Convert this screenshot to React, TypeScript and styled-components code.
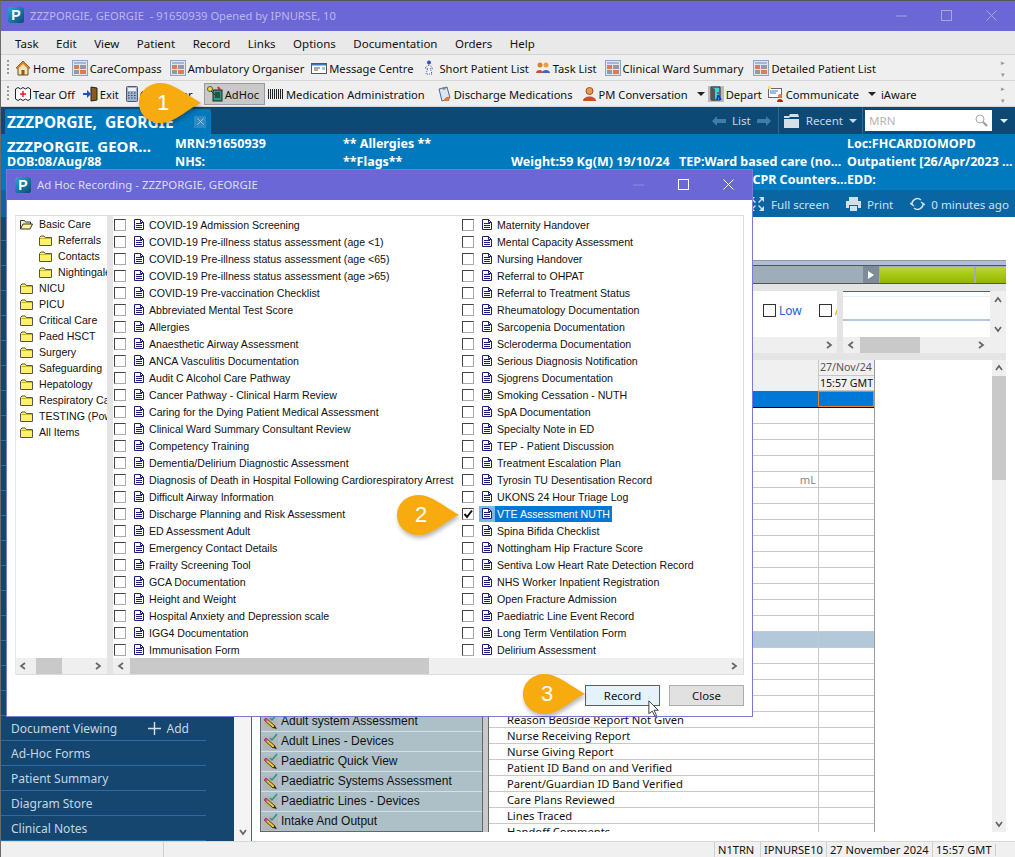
import React from "react";
import styled, { createGlobalStyle } from "styled-components";

const UI = `"Noto Sans", "Open Sans", sans-serif`;
const NARROW = `"Liberation Sans", Arial, sans-serif`;

const GlobalStyle = createGlobalStyle`
  html, body { margin: 0; padding: 0; background: #fff; }
  body { font-family: ${UI}; font-size: 11.5px; color: #111; }
  * { box-sizing: border-box; }
`;

const leftForms = [
  "COVID-19 Admission Screening",
  "COVID-19 Pre-illness status assessment (age <1)",
  "COVID-19 Pre-illness status assessment (age <65)",
  "COVID-19 Pre-illness status assessment (age >65)",
  "COVID-19 Pre-vaccination Checklist",
  "Abbreviated Mental Test Score",
  "Allergies",
  "Anaesthetic Airway Assessment",
  "ANCA Vasculitis Documentation",
  "Audit C Alcohol Care Pathway",
  "Cancer Pathway - Clinical Harm Review",
  "Caring for the Dying Patient Medical Assessment",
  "Clinical Ward Summary Consultant Review",
  "Competency Training",
  "Dementia/Delirium Diagnostic Assessment",
  "Diagnosis of Death in Hospital Following Cardiorespiratory Arrest",
  "Difficult Airway Information",
  "Discharge Planning and Risk Assessment",
  "ED Assessment Adult",
  "Emergency Contact Details",
  "Frailty Screening Tool",
  "GCA Documentation",
  "Height and Weight",
  "Hospital Anxiety and Depression scale",
  "IGG4 Documentation",
  "Immunisation Form",
];

const rightForms = [
  "Maternity Handover",
  "Mental Capacity Assessment",
  "Nursing Handover",
  "Referral to OHPAT",
  "Referral to Treatment Status",
  "Rheumatology Documentation",
  "Sarcopenia Documentation",
  "Scleroderma Documentation",
  "Serious Diagnosis Notification",
  "Sjogrens Documentation",
  "Smoking Cessation - NUTH",
  "SpA Documentation",
  "Specialty Note in ED",
  "TEP - Patient Discussion",
  "Treatment Escalation Plan",
  "Tyrosin TU Desentisation Record",
  "UKONS 24 Hour Triage Log",
  "VTE Assessment NUTH",
  "Spina Bifida Checklist",
  "Nottingham Hip Fracture Score",
  "Sentiva Low Heart Rate Detection Record",
  "NHS Worker Inpatient Registration",
  "Open Fracture Admission",
  "Paediatric Line Event Record",
  "Long Term Ventilation Form",
  "Delirium Assessment",
];

const treeItems = [
  { name: "Basic Care", open: true },
  { name: "Referrals", sub: true },
  { name: "Contacts", sub: true },
  { name: "Nightingale", sub: true },
  { name: "NICU" },
  { name: "PICU" },
  { name: "Critical Care" },
  { name: "Paed HSCT" },
  { name: "Surgery" },
  { name: "Safeguarding" },
  { name: "Hepatology" },
  { name: "Respiratory Care" },
  { name: "TESTING (Pow)" },
  { name: "All Items" },
];

const formRows = [
  "Adult Quick View",
  "Adult system Assessment",
  "Adult Lines - Devices",
  "Paediatric Quick View",
  "Paediatric Systems Assessment",
  "Paediatric Lines - Devices",
  "Intake And Output",
];

const sideItems = [
  "Summary", "Orders", "Results", "Notes", "Allergies", "Diagnoses", "Medications", "Vitals",
  "Fluid Balance", "Pathology", "Radiology", "Referrals", "Letters", "Appointments", "Care Plans",
  "Observations", "Assessments", "Tasks", "Handover", "Contacts",
];

const tableLabels: Record<number, string> = {
  19: "Reason Bedside Report Not Given",
  20: "Nurse Receiving Report",
  21: "Nurse Giving Report",
  22: "Patient ID Band on and Verified",
  23: "Parent/Guardian ID Band Verified",
  24: "Care Plans Reviewed",
  25: "Lines Traced",
  26: "Handoff Comments",
};

const Page = styled.div`
  position: relative;
  width: 1015px;
  height: 857px;
  overflow: hidden;
  display: flex;
  flex-direction: column;
  background: #fff;
  border-top: 1px solid #555;
  border-left: 1px solid #6a6a6a;
`;

const TitleBar = styled.div`
  height: 30px;
  flex: none;
  display: flex;
  align-items: center;
  padding: 0 0 2px 7px;
  gap: 6px;
  background: #6b67d6;
  color: #b9b8ec;
  font-size: 11.2px;
  white-space: pre;
`;

const WindowButtons = styled.div<{ $gap: number; $right: number }>`
  margin-left: auto;
  margin-right: ${(p) => p.$right}px;
  display: flex;
  align-items: center;
  gap: ${(p) => p.$gap}px;
`;

const MenuBar = styled.div`
  height: 24px;
  flex: none;
  display: flex;
  align-items: center;
  padding: 2px 0 0 14px;
  gap: 17.5px;
  background: #e8e9e8;
  border-bottom: 1px solid #d4d4d4;
`;

const Toolbar = styled.div`
  height: 26px;
  flex: none;
  display: flex;
  align-items: center;
  background: #eeefee;
  border-bottom: 1px solid #d4d4d4;
  padding: 1px 0 0 6px;
  font-size: 11.15px;
  white-space: nowrap;
  position: relative;
`;

const Grip = styled.div`
  width: 2px;
  height: 16px;
  margin-right: 6px;
  background: repeating-linear-gradient(to bottom, #999 0 2px, transparent 2px 4px);
`;

const ToolItem = styled.div<{ $active?: boolean; $gap?: number }>`
  display: flex;
  align-items: center;
  gap: 2px;
  height: 22px;
  padding: 0 ${(p) => (p.$active ? 5 : 0)}px 0 ${(p) => (p.$active ? 2 : 0)}px;
  margin-right: ${(p) => (p.$gap !== undefined ? p.$gap : 7)}px;
  background: ${(p) => (p.$active ? "#c9c9c9" : "transparent")};
  border: ${(p) => (p.$active ? "1px solid #9a9a9a" : "none")};
`;

const Overflow = styled.div`
  margin-left: auto;
  margin-right: 6px;
  width: 8px;
  display: flex;
  flex-direction: column;
  gap: 5px;
  color: #999;
  font-size: 7px;
  line-height: 7px;
`;

const TabBar = styled.div`
  height: 27px;
  flex: none;
  display: flex;
  align-items: flex-end;
  padding-left: 4px;
  background: #0c4a75;
  color: #c7d7e5;
`;

const Tab = styled.div`
  width: 206px;
  height: 25px;
  display: flex;
  align-items: center;
  justify-content: space-between;
  padding: 0 5px 0 2px;
  background: #0079bf;
  color: #fff;
  font-weight: 700;
  font-size: 15.6px;
  white-space: pre;
  border-radius: 2px 2px 0 0;
`;

const TabClose = styled.span`
  width: 12px;
  height: 12px;
  display: flex;
  align-items: center;
  justify-content: center;
  background: #2f8ac2;
`;

const TabTools = styled.div`
  margin-left: auto;
  height: 27px;
  display: flex;
  align-items: center;
  font-size: 11.6px;
`;

const TabTool = styled.div<{ $pad: number; $after: number }>`
  height: 27px;
  display: flex;
  align-items: center;
  gap: 6px;
  padding-right: ${(p) => p.$pad}px;
  margin-right: ${(p) => p.$after}px;
  border-right: 1px solid #2a6a94;
`;

const SearchBox = styled.div`
  width: 127px;
  height: 21px;
  display: flex;
  align-items: center;
  justify-content: space-between;
  padding: 0 4px;
  background: #fff;
  color: #b5b5b5;
`;

const Caret = styled.span<{ $color?: string }>`
  width: 0;
  height: 0;
  border-left: 4px solid transparent;
  border-right: 4px solid transparent;
  border-top: 4px solid ${(p) => p.$color || "#c7d7e5"};
`;

const MenuCaret = styled(Caret)`
  margin-left: 7px;
`;

const DownBox = styled.div`
  width: 23px;
  display: flex;
  justify-content: center;
`;

const Banner = styled.div`
  height: 56px;
  flex: none;
  display: grid;
  grid-template-columns: repeat(6, 168px);
  grid-auto-rows: 18px;
  padding: 1px 0 0 6px;
  background: #0079bf;
  color: #fff;
  font-weight: 700;
  font-size: 12.5px;
  line-height: 18px;
  white-space: nowrap;
`;

const PatientName = styled.div`
  font-size: 15px;
  line-height: 20px;
  padding-top: 1px;
`;

const BannerEnd = styled.div<{ $col: number }>`
  grid-column: ${(p) => p.$col};
  justify-self: end;
`;

const ActionBar = styled.div`
  height: 27px;
  flex: none;
  display: flex;
  align-items: center;
  justify-content: flex-end;
  padding: 1px 6px 0 0;
  gap: 6px;
  background: #0a65a3;
  color: #cfe0ee;
  font-size: 11.6px;
`;

const ActionGap = styled.span`
  width: 5px;
`;

const Main = styled.div`
  flex: 1;
  min-height: 0;
  display: flex;
  border-bottom: 1px solid #d8d8d8;
`;

const Sidebar = styled.div`
  width: 233px;
  flex: none;
  display: flex;
  flex-direction: column;
  justify-content: flex-end;
  overflow: hidden;
  background: #14466f;
  color: #c6d6e6;
`;

const SideRow = styled.div`
  width: 205px;
  height: 25px;
  flex: none;
  display: flex;
  align-items: center;
  justify-content: space-between;
  padding: 0 17px 0 10px;
  border-bottom: 1px solid #2a6ca8;
  font-size: 12px;
`;

const SideAdd = styled.span`
  display: flex;
  align-items: center;
  gap: 6px;
`;

const SideScroll = styled.div`
  width: 18px;
  flex: none;
  display: flex;
  flex-direction: column;
  justify-content: flex-end;
  align-items: center;
  padding-bottom: 5px;
  background: #f4f4f4;
  border-right: 1px solid #1c6fb0;
`;

const Content = styled.div`
  flex: 1;
  min-width: 0;
  display: flex;
  flex-direction: column;
  padding: 43px 9px 0 0;
`;

const Timeline = styled.div`
  height: 24px;
  flex: none;
  display: flex;
  flex-direction: column;
  background: #fff;
  border-top: 1px solid #999;
`;

const TimelineStripe = styled.div`
  height: 5px;
  flex: none;
  background: #a9c0d8;
  border-bottom: 1px solid #555;
`;

const TimelineBar = styled.div`
  flex: 1;
  display: flex;
  justify-content: flex-end;
  gap: 2px;
  background: #9eadb8;
  border-bottom: 1px solid #555;
  padding-top: 1px;
`;

const TimelineArrow = styled.div`
  width: 16px;
  display: flex;
  align-items: center;
  justify-content: center;
  background: #7d8c99;
  margin-right: -1px;
  margin-top: -1px;
`;

const GreenBlock = styled.div<{ $width: number }>`
  width: ${(p) => p.$width}px;
  background: linear-gradient(180deg, #bcd92a 0%, #93b500 100%);
`;

const Filters = styled.div`
  height: 76px;
  flex: none;
  display: flex;
  gap: 6px;
  padding: 7px 0;
  background: #e4e4e4;
`;

const FilterPane = styled.div`
  flex: 1;
  display: flex;
  flex-direction: column;
  background: #fff;
`;

const FilterChecks = styled.div`
  flex: 1;
  display: flex;
  align-items: center;
  justify-content: flex-end;
  gap: 3px;
  padding-bottom: 8px;
  overflow: hidden;
`;

const FilterLabel = styled.span<{ $color: string; $width: number }>`
  width: ${(p) => p.$width}px;
  overflow: hidden;
  color: ${(p) => p.$color};
  font-size: 12px;
`;

const FilterBox = styled.span`
  width: 13px;
  height: 13px;
  flex: none;
  background: #fff;
  border: 1px solid #333;
`;

const HScroll = styled.div<{ $h?: number }>`
  height: ${(p) => p.$h || 16}px;
  flex: none;
  display: flex;
  align-items: center;
  background: #efefef;
`;

const ScrollThumb = styled.div<{ $left: number; $width: number }>`
  width: ${(p) => p.$width}px;
  margin-left: ${(p) => p.$left}px;
  height: 100%;
  background: #c9c9c9;
`;

const ScrollEnd = styled.div<{ $pad: number }>`
  margin-left: auto;
  margin-right: ${(p) => p.$pad}px;
  display: flex;
`;

const ScrollStart = styled.div<{ $pad: number }>`
  margin-left: ${(p) => p.$pad}px;
  width: 0;
  display: flex;
`;

const SidePane = styled.div`
  width: 163px;
  flex: none;
  display: grid;
  grid-template-columns: 1fr 16px;
  grid-template-rows: 1fr 16px;
  background: #efefef;
`;

const SideInner = styled.div`
  background: #fff;
  border-top: 1px solid #1c6fb0;
  display: flex;
  flex-direction: column;
`;

const InnerLine = styled.div<{ $top: number; $color: string; $h: number }>`
  margin-top: ${(p) => p.$top}px;
  height: ${(p) => p.$h}px;
  background: ${(p) => p.$color};
`;

const VButtons = styled.div`
  display: flex;
  flex-direction: column;
  align-items: center;
  justify-content: space-between;
  padding: 5px 0 4px;
`;

const GridArea = styled.div`
  flex: 1;
  min-height: 0;
  display: flex;
  overflow: hidden;
  margin-bottom: 9px;
`;

const FormColumn = styled.div`
  width: 222px;
  margin-left: 8px;
  flex: none;
  display: flex;
  flex-direction: column;
  justify-content: flex-end;
  overflow: hidden;
  background: #adc0c8;
  border-bottom: 1px solid #666;
  border-left: 1px solid #666;
`;

const FormRow = styled.div`
  height: 20px;
  flex: none;
  display: flex;
  align-items: center;
  gap: 3px;
  padding: 0 0 1px 2px;
  border-top: 1px solid #d5e0e4;
  font-family: ${NARROW};
  font-size: 12px;
  color: #111;
`;

const FormScroll = styled.div`
  width: 7px;
  flex: none;
  background: #c9c9c9;
  border-left: 1px solid #666;
  border-right: 1px solid #666;
`;

const Table = styled.div`
  width: 386px;
  flex: none;
  display: flex;
  flex-direction: column;
  border-right: 1px solid #999;
  overflow: hidden;
`;

const HeadRow = styled.div<{ $h: number }>`
  height: ${(p) => p.$h}px;
  flex: none;
  display: flex;
  background: #f0f0f0;
`;

const HeadLabel = styled.div`
  flex: 1;
`;

const HeadCell = styled.div<{ $dark?: boolean }>`
  width: 56px;
  flex: none;
  padding-left: 1px;
  border-left: 1px solid #c8c8c8;
  border-bottom: 1px solid #c8c8c8;
  font-size: 10.6px;
  line-height: 15px;
  color: ${(p) => (p.$dark ? "#111" : "#555")};
  white-space: nowrap;
  overflow: hidden;
`;

const SelectedRow = styled.div`
  height: 17px;
  flex: none;
  display: flex;
  background: #0078d7;
  border-bottom: 1px solid #000;
`;

const SelectedCell = styled.div`
  width: 56px;
  margin-left: auto;
  border: 1px solid #e8812a;
`;

const DataRow = styled.div<{ $band?: boolean }>`
  height: 16px;
  flex: none;
  display: flex;
  background: ${(p) => (p.$band ? "#b3c8db" : "#fff")};
  border-bottom: 1px solid #c8c8c8;
  font-size: 11.2px;
  line-height: 15px;
`;

const DataLabel = styled.div`
  flex: 1;
  padding-left: 18px;
  white-space: nowrap;
`;

const Unit = styled.span`
  float: right;
  margin-right: 2px;
  color: #888;
`;

const DataCell = styled.div`
  width: 56px;
  flex: none;
  border-left: 1px solid #c8c8c8;
`;

const VScroll = styled.div`
  width: 14px;
  margin-left: auto;
  flex: none;
  display: flex;
  flex-direction: column;
  justify-content: space-between;
  align-items: center;
  background: #efefef;
`;

const VArrow = styled.div`
  height: 16px;
  display: flex;
  align-items: center;
  justify-content: center;
`;

const VThumb = styled.div`
  width: 14px;
  height: 104px;
  background: #c9c9c9;
  margin-bottom: auto;
`;

const StatusBar = styled.div`
  height: 15px;
  flex: none;
  display: flex;
  justify-content: flex-end;
  align-items: center;
  background: #f0f0f0;
  font-size: 11.1px;
  line-height: 15px;
`;

const Lead = styled.div`
  width: 163px;
  height: 15px;
  flex: none;
  border-right: 1px solid #d0d0d0;
  margin-right: auto;
`;

const StatusCell = styled.div<{ $width: number }>`
  width: ${(p) => p.$width}px;
  height: 15px;
  padding-left: 3px;
  border-left: 1px solid #d0d0d0;
  white-space: nowrap;
  overflow: hidden;
`;

const StatusGrip = styled.div`
  width: 20px;
  height: 12px;
  border-left: 1px solid #d0d0d0;
`;

const Dialog = styled.div`
  position: absolute;
  left: 5px;
  top: 168px;
  width: 747px;
  height: 548px;
  display: flex;
  flex-direction: column;
  background: #fff;
  border: 1px solid #7a78d8;
`;

const DialogTitle = styled.div`
  height: 30px;
  flex: none;
  display: flex;
  align-items: center;
  gap: 6px;
  padding: 0 0 1px 8px;
  background: #6b67d6;
  color: #dcdcf5;
  font-size: 11.4px;
`;

const DialogBody = styled.div`
  flex: 1;
  display: flex;
  flex-direction: column;
  padding: 15px 8px 9px 8px;
`;

const Split = styled.div`
  height: 460px;
  flex: none;
  display: flex;
  background: #e4e4e4;
  border-top: 1px solid #dcdcdc;
  border-bottom: 1px solid #dcdcdc;
  border-right: 1px solid #dcdcdc;
  border-left: 1px solid #e8e8e8;
`;

const Tree = styled.div`
  width: 91px;
  flex: none;
  display: flex;
  flex-direction: column;
  background: #fff;
  margin-right: 6px;
`;

const TreeRows = styled.div`
  flex: 1;
  min-height: 0;
  overflow: hidden;
  font-family: ${NARROW};
  font-size: 10.6px;
`;

const TreeRow = styled.div<{ $sub?: boolean }>`
  height: 16px;
  display: flex;
  align-items: center;
  gap: 6px;
  padding-left: ${(p) => (p.$sub ? 23 : 4)}px;
  white-space: nowrap;
`;

const Lists = styled.div`
  flex: 1;
  min-width: 0;
  display: flex;
  flex-direction: column;
  background: #fff;
`;

const FormGrid = styled.div`
  flex: 1;
  min-height: 0;
  display: grid;
  grid-template-columns: 348px 1fr;
  grid-template-rows: repeat(26, 17px);
  grid-auto-flow: column;
  padding: 0 0 0 1px;
  overflow: hidden;
  font-family: ${NARROW};
  font-size: 10.6px;
`;

const FormItem = styled.div`
  display: flex;
  align-items: center;
  white-space: nowrap;
  min-width: 0;
  overflow: hidden;
`;

const Check = styled.span`
  width: 12px;
  height: 12px;
  flex: none;
  margin-right: 5px;
  background: #fff;
  border: 1px solid;
  border-color: #444 #aaa #aaa #444;
  display: flex;
  align-items: center;
  justify-content: center;
`;

const DocIcon = styled.span<{ $sel?: boolean }>`
  width: 16px;
  height: 16px;
  flex: none;
  display: flex;
  align-items: center;
  justify-content: center;
  background: ${(p) => (p.$sel ? "#7ab8e8" : "transparent")};
`;

const FormText = styled.span<{ $sel?: boolean }>`
  padding: 0 2px 0 2px;
  line-height: 16px;
  background: ${(p) => (p.$sel ? "#0078d7" : "transparent")};
  color: ${(p) => (p.$sel ? "#fff" : "#111")};
`;

const DialogActions = styled.div`
  display: flex;
  justify-content: flex-end;
  gap: 9px;
  margin-top: 10px;
`;

const DialogButton = styled.div<{ $primary?: boolean }>`
  width: 75px;
  height: 21px;
  display: flex;
  align-items: center;
  justify-content: center;
  background: ${(p) => (p.$primary ? "#e5f1fb" : "#e1e1e1")};
  border: 1px solid ${(p) => (p.$primary ? "#0078d7" : "#adadad")};
  font-size: 11.4px;
`;

const Callout = styled.div<{ $x: number; $y: number }>`
  position: absolute;
  left: ${(p) => p.$x}px;
  top: ${(p) => p.$y}px;
  width: 68px;
  height: 48px;
  pointer-events: none;
`;

const CalloutNumber = styled.span`
  position: absolute;
  left: 15px;
  top: 11px;
  width: 26px;
  text-align: center;
  color: #fff;
  font-family: ${NARROW};
  font-size: 22px;
  line-height: 26px;
`;

const Cursor = styled.div`
  position: absolute;
  left: 647px;
  top: 699px;
  width: 12px;
  height: 18px;
`;

const Logo = () => (
  <svg width="16" height="16" viewBox="0 0 16 16" style={{ flex: "none" }}>
    <defs>
      <linearGradient id="lg" x1="0" y1="0" x2="1" y2="1">
        <stop offset="0" stopColor="#2aa6d8" />
        <stop offset="1" stopColor="#0a4a72" />
      </linearGradient>
    </defs>
    <rect width="16" height="16" rx="2.5" fill="url(#lg)" />
    <text x="8" y="13" textAnchor="middle" fontFamily="Liberation Sans" fontWeight="700" fontSize="14" fill="#fff">P</text>
  </svg>
);

const Sq = ({ c = "#a8a6e6" }: { c?: string }) => (
  <svg width="11" height="11" viewBox="0 0 11 11"><rect x=".5" y=".5" width="10" height="10" fill="none" stroke={c} /></svg>
);
const Min = ({ c = "#a8a6e6" }: { c?: string }) => (
  <svg width="11" height="11" viewBox="0 0 11 11"><path d="M0 6h11" stroke={c} /></svg>
);
const Cross = ({ c = "#a8a6e6", s = 11 }: { c?: string; s?: number }) => (
  <svg width={s} height={s} viewBox="0 0 11 11"><path d="M.5.5l10 10M10.5.5l-10 10" stroke={c} /></svg>
);

const Chevron = ({ dir, c = "#666", s = 8 }: { dir: "l" | "r" | "u" | "d"; c?: string; s?: number }) => {
  const d = { l: "M6 1L2 4l4 3", r: "M2 1l4 3-4 3", u: "M1 6l3-4 3 4", d: "M1 2l3 4 3-4" }[dir];
  return (
    <svg width={s} height={s} viewBox="0 0 8 8" style={{ flex: "none" }}><path d={d} fill="none" stroke={c} strokeWidth="1.7" /></svg>
  );
};

const Folder = ({ open }: { open?: boolean }) => (
  <svg width="13" height="11" viewBox="0 0 13 11" style={{ flex: "none" }}>
    {open ? (
      <>
        <path d="M.5 10V1.5h4l1 1.5h5v2" fill="#f4f0c8" stroke="#333" />
        <path d="M.5 10l2.5-5h9.5l-2.5 5z" fill="#fff3a0" stroke="#333" />
      </>
    ) : (
      <>
        <path d="M.5 2.5L2 1h3l1.2 1.5h6.3v8H.5z" fill="#fff06a" stroke="#555" />
        <path d="M1 3.5h11" stroke="#c8b830" />
      </>
    )}
  </svg>
);

const Doc = () => (
  <svg width="10" height="11" viewBox="0 0 10 11">
    <path d="M.5.5h6l3 3v7h-9z" fill="#fff" stroke="#1c1c7a" />
    <path d="M2 4.5h6M2 6.5h6M2 8.5h6M6.5.5v3h3" fill="none" stroke="#1c1c7a" />
  </svg>
);

const I = ({ children, w = 16 }: { children: React.ReactNode; w?: number }) => (
  <svg width={w} height="16" viewBox={`0 0 ${w} 16`} style={{ flex: "none" }}>{children}</svg>
);

const HomeIcon = () => (
  <I><path d="M8 1L1 8h2v7h10V8h2z" fill="#f5e3b0" stroke="#6a4a20" /><path d="M8 1L1 8h3l4-4 4 4h3z" fill="#d9822b" /><rect x="6.5" y="10" width="3" height="5" fill="#8a5a2a" /></I>
);
const GridIcon = () => (
  <I>
    <rect x=".5" y=".5" width="15" height="15" fill="#dce6f0" stroke="#8aa6c4" />
    <path d="M2 3h12" stroke="#6a8ab0" />
    <rect x="2" y="5" width="5" height="4" fill="#e07a50" /><rect x="8" y="5" width="6" height="4" fill="#999" />
    <rect x="2" y="10" width="5" height="4" fill="#999" /><rect x="8" y="10" width="6" height="4" fill="#e07a50" />
  </I>
);
const MailIcon = () => (
  <I><rect x=".5" y="3.5" width="15" height="10" fill="#fff" stroke="#556" /><path d="M1 4h14v1.5H1z" fill="#3a78c0" /><path d="M3 8h6M3 10h4" stroke="#555" /><rect x="11" y="7" width="3" height="3" fill="#9cc" /></I>
);
const PersonIcon = () => (
  <I w={14}><circle cx="6" cy="2.5" r="2" fill="#3050c0" /><path d="M6 5L2 8l1 1 2-1-2 6h6L7 8l2 1 1-1z" fill="#fff" stroke="#3050c0" strokeDasharray="1 1" /></I>
);
const TeamIcon = () => (
  <I><circle cx="5" cy="5" r="2.5" fill="#d9822b" /><path d="M1 13c0-4 7-4 7 0z" fill="#c8502b" /><circle cx="11" cy="5" r="2.5" fill="#e0a050" /><path d="M7 13c0-4 8-4 8 0z" fill="#3a68c0" /></I>
);
const TearIcon = () => (
  <I><path d="M.5 3l2.500-1.500L5.500 3 8 1.500 10.500 3 13 1.500 15.500 3v10L13 14.500 10.500 13 8 14.500 5.500 13 3 14.500.5 13z" fill="#fff" stroke="#222" /><path d="M8 5v6M5 8h6" stroke="#e02020" strokeWidth="1.5" /></I>
);
const ExitIcon = () => (
  <I><path d="M9 1l6 1v12l-6 1z" fill="#8a5a20" stroke="#222" /><path d="M1 7h4V4l4 4-4 4V9H1z" fill="#2050c0" /></I>
);
const CalcIcon = () => (
  <I w={12}><rect x=".5" y=".5" width="11" height="15" rx="1" fill="#9cb4d0" stroke="#557" /><rect x="2" y="2" width="8" height="3" fill="#e8f0f8" /><path d="M2 7h8M2 9.5h8M2 12h8" stroke="#345" strokeDasharray="1.5 1.5" /></I>
);
const AdHocIcon = () => (
  <I><rect x="6" y="4" width="9" height="11" fill="#2a9a80" stroke="#222" /><path d="M8 7h5M8 9h5M8 11h5" stroke="#111" /><circle cx="3" cy="3" r="2.5" fill="#f0e020" stroke="#555" /><path d="M4 5l4 4" stroke="#333" /><path d="M11 1l2 3" stroke="#d02020" strokeWidth="2" /></I>
);
const BarcodeIcon = () => (
  <I><path d="M.5 3v10M2.500 3v10M4.500 3v10M6.500 3v10M8.500 3v10M10.500 3v10M12.500 3v10M14.500 3v10" stroke="#222" /></I>
);
const ClipIcon = () => (
  <I><path d="M3 3l8-2 3 11-8 3z" fill="#dce6f0" stroke="#4a6a90" /><path d="M6 2l3-1 1 2-3 1z" fill="#888" /><path d="M8 15c0-3 3-5 6-4l-1 4z" fill="#e07a30" /></I>
);
const AgentIcon = () => (
  <I w={15}><circle cx="7.5" cy="5" r="3.5" fill="#e89a50" stroke="#a05020" /><path d="M1 15c0-6 13-6 13 0z" fill="#c8502b" /></I>
);
const DepartIcon = () => (
  <I><rect width="16" height="16" fill="#bbb" /><path d="M3 1h9v13H3z" fill="#30d8e0" stroke="#222" /><path d="M3 1l4 2v12l-4-1z" fill="#555" /><path d="M10 9l-1 5M10 9l3 5" stroke="#1030b0" strokeWidth="1.5" /><circle cx="10" cy="7" r="1" fill="#d02020" /></I>
);
const CommIcon = () => (
  <I><rect x=".5" y="2.5" width="13" height="9" fill="#fff" stroke="#667" /><path d="M2 5h8M2 7h6" stroke="#3a78c0" /><rect y="0" width="3" height="3" fill="#f0e080" /><circle cx="12" cy="10" r="2" fill="#e08030" /><path d="M9 16c0-4 6-4 6 0z" fill="#c02010" /></I>
);

const Pen = () => (
  <svg width="15" height="17" viewBox="0 0 15 17" style={{ flex: "none" }}>
    <rect y="3" width="15" height="14" fill="#b5b5b5" />
    <path d="M1 7l2-2 9 8-2 2z" fill="#e8c820" stroke="#222" strokeWidth=".8" />
    <path d="M1 7l2-2 2 2-2 2z" fill="#e040a0" />
    <path d="M10 15l2-2 2 3z" fill="#222" />
    <path d="M7 5l2 2 5-6" fill="none" stroke="#1a9a8a" strokeWidth="1.5" />
  </svg>
);

const TEAR = "M4 24C4 12 14 4 26 4C38 4 52 16 66 24C52 30 40 44 26 44C14 44 4 36 4 24z";

const Tear = () => (
  <svg width="68" height="48" viewBox="0 0 68 48" style={{ overflow: "visible" }}>
    <path d={TEAR} fill="#000" opacity=".28" transform="translate(1 3)" style={{ filter: "blur(2px)" }} />
    <path d={TEAR} fill="#f8ab0e" />
  </svg>
);

const Step = ({ x, y, n }: { x: number; y: number; n: number }) => (
  <Callout $x={x} $y={y}>
    <Tear />
    <CalloutNumber>{n}</CalloutNumber>
  </Callout>
);

const tools1: [React.ReactNode, string, number][] = [
  [<HomeIcon />, "Home", 7],
  [<GridIcon />, "CareCompass", 8],
  [<GridIcon />, "Ambulatory Organiser", 7],
  [<MailIcon />, "Message Centre", 10],
  [<PersonIcon />, "Short Patient List", 6],
  [<TeamIcon />, "Task List", 8],
  [<GridIcon />, "Clinical Ward Summary", 10],
  [<GridIcon />, "Detailed Patient List", 7],
];

const rowCount = 27;

export default function App() {
  return (
    <>
      <GlobalStyle />
      <Page>
        <TitleBar>
          <Logo />
          ZZZPORGIE, GEORGIE  - 91650939 Opened by IPNURSE, 10
          <WindowButtons $gap={34} $right={18}>
            <Min />
            <Sq />
            <Cross />
          </WindowButtons>
        </TitleBar>
        <MenuBar>
          {["Task", "Edit", "View", "Patient", "Record", "Links", "Options", "Documentation", "Orders", "Help"].map((m) => (
            <span key={m}>{m}</span>
          ))}
        </MenuBar>
        <Toolbar>
          <Grip />
          {tools1.map(([icon, label, gap]) => (
            <ToolItem key={label} $gap={gap}>{icon}{label}</ToolItem>
          ))}
          <Overflow><span>▸</span><span>▾</span></Overflow>
        </Toolbar>
        <Toolbar>
          <Grip />
          <ToolItem><TearIcon />Tear Off</ToolItem>
          <ToolItem><ExitIcon />Exit</ToolItem>
          <ToolItem $gap={11}><CalcIcon />Calculator</ToolItem>
          <ToolItem $active $gap={3}><AdHocIcon />AdHoc</ToolItem>
          <ToolItem $gap={11}><BarcodeIcon />Medication Administration</ToolItem>
          <ToolItem $gap={9}><ClipIcon />Discharge Medications</ToolItem>
          <ToolItem $gap={3}><AgentIcon />PM Conversation<MenuCaret $color="#222" /></ToolItem>
          <ToolItem $gap={6}><DepartIcon />Depart</ToolItem>
          <ToolItem $gap={5}><CommIcon />Communicate<MenuCaret $color="#222" /></ToolItem>
          <ToolItem>iAware</ToolItem>
          <Overflow><span>▸</span><span>▾</span></Overflow>
        </Toolbar>
        <TabBar>
          <Tab>
            {"ZZZPORGIE,  GEORGIE"}
            <TabClose><Cross c="#d8e8f4" s={7} /></TabClose>
          </Tab>
          <TabTools>
            <TabTool $pad={7} $after={5}>
              <svg width="14" height="10" viewBox="0 0 14 10"><path d="M5 0L0 5l5 5V7h9V3H5z" fill="#3f7ca8" /></svg>
              List
              <svg width="14" height="10" viewBox="0 0 14 10"><path d="M9 0l5 5-5 5V7H0V3h9z" fill="#3f7ca8" /></svg>
            </TabTool>
            <TabTool $pad={5} $after={2}>
              <svg width="16" height="14" viewBox="0 0 16 14"><path d="M0 2h5l1-2h8l1 3H6L5 4H0z" fill="#d5dfe8" /><path d="M0 5h15v9H0z" fill="#d5dfe8" /></svg>
              Recent
              <Caret />
            </TabTool>
            <SearchBox>
              MRN
              <svg width="13" height="13" viewBox="0 0 13 13"><circle cx="5" cy="5" r="4" fill="none" stroke="#aaa" /><path d="M8 8l4 4" stroke="#999" strokeWidth="2" /></svg>
            </SearchBox>
            <DownBox><Caret $color="#e8eef4" /></DownBox>
          </TabTools>
        </TabBar>
        <Banner>
          <PatientName>ZZZPORGIE. GEOR...</PatientName>
          <div>MRN:91650939</div>
          <div>** Allergies **</div>
          <div />
          <div />
          <div>Loc:FHCARDIOMOPD</div>
          <div>DOB:08/Aug/88</div>
          <div>NHS:</div>
          <div>**Flags**</div>
          <div>Weight:59 Kg(M) 19/10/24</div>
          <div>TEP:Ward based care (no...</div>
          <div>Outpatient [26/Apr/2023 ...</div>
          <BannerEnd $col={5}>CPR Counters...</BannerEnd>
          <div>EDD:</div>
        </Banner>
        <ActionBar>
          <svg width="16" height="16" viewBox="0 0 16 16"><path d="M1 1h5L4 3l3 3-1 1-3-3-2 2zM15 1v5l-2-2-3 3-1-1 3-3-2-2zM1 15v-5l2 2 3-3 1 1-3 3 2 2zM15 15h-5l2-2-3-3 1-1 3 3 2-2z" fill="#cfe0ee" /></svg>
          Full screen
          <ActionGap />
          <svg width="15" height="16" viewBox="0 0 15 16"><path d="M3 1h9v4H3zM0 5h15v7h-3V9H3v3H0zM4 10h7v5H4z" fill="#cfe0ee" /></svg>
          Print
          <ActionGap />
          <svg width="15" height="14" viewBox="0 0 15 14"><path d="M2 8a5.500 5.500 0 0 1 9-5M13 6a5.500 5.500 0 0 1-9 5" fill="none" stroke="#cfe0ee" strokeWidth="1.5" /><path d="M0 6l4 3M15 8l-4-3" stroke="#cfe0ee" strokeWidth="1.5" /></svg>
          0 minutes ago
        </ActionBar>
        <Main>
          <Sidebar>
            {sideItems.map((s) => (
              <SideRow key={s}>{s}</SideRow>
            ))}
            <SideRow>
              Document Viewing
              <SideAdd>
                <svg width="13" height="13" viewBox="0 0 13 13"><path d="M6.500 0v13M0 6.500h13" stroke="#d5e2ee" strokeWidth="1.4" /></svg>
                Add
              </SideAdd>
            </SideRow>
            <SideRow>Ad-Hoc Forms</SideRow>
            <SideRow>Patient Summary</SideRow>
            <SideRow>Diagram Store</SideRow>
            <SideRow>Clinical Notes</SideRow>
          </Sidebar>
          <SideScroll><Chevron dir="d" /></SideScroll>
          <Content>
            <Timeline>
              <TimelineStripe />
              <TimelineBar>
                <TimelineArrow>
                  <svg width="6" height="8" viewBox="0 0 6 8"><path d="M0 0l6 4-6 4z" fill="#fff" /></svg>
                </TimelineArrow>
                <GreenBlock $width={94} />
                <GreenBlock $width={30} />
              </TimelineBar>
            </Timeline>
            <Filters>
              <FilterPane>
                <FilterChecks>
                  <FilterBox />
                  <FilterLabel $color="#2a5ed8" $width={37}>Low</FilterLabel>
                  <FilterBox />
                  <FilterLabel $color="#e88a20" $width={2}>Abnormal</FilterLabel>
                </FilterChecks>
                <HScroll>
                  <ScrollEnd $pad={4}><Chevron dir="r" /></ScrollEnd>
                </HScroll>
              </FilterPane>
              <SidePane>
                <SideInner>
                  <InnerLine $top={4} $color="#e8eef2" $h={1} />
                  <InnerLine $top={22} $color="#b3c8db" $h={2} />
                </SideInner>
                <VButtons><Chevron dir="u" /><Chevron dir="d" /></VButtons>
                <HScroll>
                  <ScrollStart $pad={4}><Chevron dir="l" /></ScrollStart>
                  <ScrollThumb $left={13} $width={60} />
                  <ScrollEnd $pad={5}><Chevron dir="r" /></ScrollEnd>
                </HScroll>
                <div />
              </SidePane>
            </Filters>
            <GridArea>
              <FormColumn>
                {formRows.map((f) => (
                  <FormRow key={f}><Pen />{f}</FormRow>
                ))}
              </FormColumn>
              <FormScroll />
              <Table>
                <HeadRow $h={16}>
                  <HeadLabel />
                  <HeadCell>27/Nov/24</HeadCell>
                </HeadRow>
                <HeadRow $h={15}>
                  <HeadLabel />
                  <HeadCell $dark>15:57 GMT</HeadCell>
                </HeadRow>
                <SelectedRow><SelectedCell /></SelectedRow>
                {Array.from({ length: rowCount }, (_, i) => (
                  <DataRow key={i} $band={i === 14}>
                    <DataLabel>
                      {tableLabels[i]}
                      {i === 4 && <Unit>mL</Unit>}
                    </DataLabel>
                    <DataCell />
                  </DataRow>
                ))}
              </Table>
              <VScroll>
                <VArrow><Chevron dir="u" /></VArrow>
                <VThumb />
                <VArrow><Chevron dir="d" /></VArrow>
              </VScroll>
            </GridArea>
          </Content>
        </Main>
        <StatusBar>
          <Lead />
          <StatusCell $width={46}>N1TRN</StatusCell>
          <StatusCell $width={66}>IPNURSE10</StatusCell>
          <StatusCell $width={106}>27 November 2024</StatusCell>
          <StatusCell $width={63}>15:57 GMT</StatusCell>
          <StatusGrip />
        </StatusBar>

        <Dialog>
          <DialogTitle>
            <Logo />
            Ad Hoc Recording - ZZZPORGIE, GEORGIE
            <WindowButtons $gap={34} $right={18}>
              <Min c="#8f8de0" />
              <Sq c="#fff" />
              <Cross c="#fff" />
            </WindowButtons>
          </DialogTitle>
          <DialogBody>
            <Split>
              <Tree>
                <TreeRows>
                  {treeItems.map((t) => (
                    <TreeRow key={t.name} $sub={t.sub}>
                      <Folder open={t.open} />
                      {t.name}
                    </TreeRow>
                  ))}
                </TreeRows>
                <HScroll>
                  <ScrollStart $pad={3}><Chevron dir="l" /></ScrollStart>
                  <ScrollThumb $left={17} $width={26} />
                  <ScrollEnd $pad={5}><Chevron dir="r" /></ScrollEnd>
                </HScroll>
              </Tree>
              <Lists>
                <FormGrid>
                  {[...leftForms, ...rightForms].map((f) => {
                    const sel = f === "VTE Assessment NUTH";
                    return (
                      <FormItem key={f}>
                        <Check>
                          {sel && (
                            <svg width="10" height="10" viewBox="0 0 10 10"><path d="M1.500 5l2.500 3 5-6.500" fill="none" stroke="#111" strokeWidth="2" /></svg>
                          )}
                        </Check>
                        <DocIcon $sel={sel}><Doc /></DocIcon>
                        <FormText $sel={sel}>{f}</FormText>
                      </FormItem>
                    );
                  })}
                </FormGrid>
                <HScroll>
                  <ScrollStart $pad={4}><Chevron dir="l" /></ScrollStart>
                  <ScrollThumb $left={13} $width={299} />
                  <ScrollEnd $pad={5}><Chevron dir="r" /></ScrollEnd>
                </HScroll>
              </Lists>
            </Split>
            <DialogActions>
              <DialogButton $primary>Record</DialogButton>
              <DialogButton>Close</DialogButton>
            </DialogActions>
          </DialogBody>
        </Dialog>

        <Step x={134} y={78} n={1} />
        <Step x={392} y={490} n={2} />
        <Step x={518} y={669} n={3} />

        <Cursor>
          <svg width="12" height="18" viewBox="0 0 14 21"><path d="M1 1v15l4-3 3 6 2-1-3-6h5z" fill="#fff" stroke="#222" /></svg>
        </Cursor>
      </Page>
    </>
  );
}
